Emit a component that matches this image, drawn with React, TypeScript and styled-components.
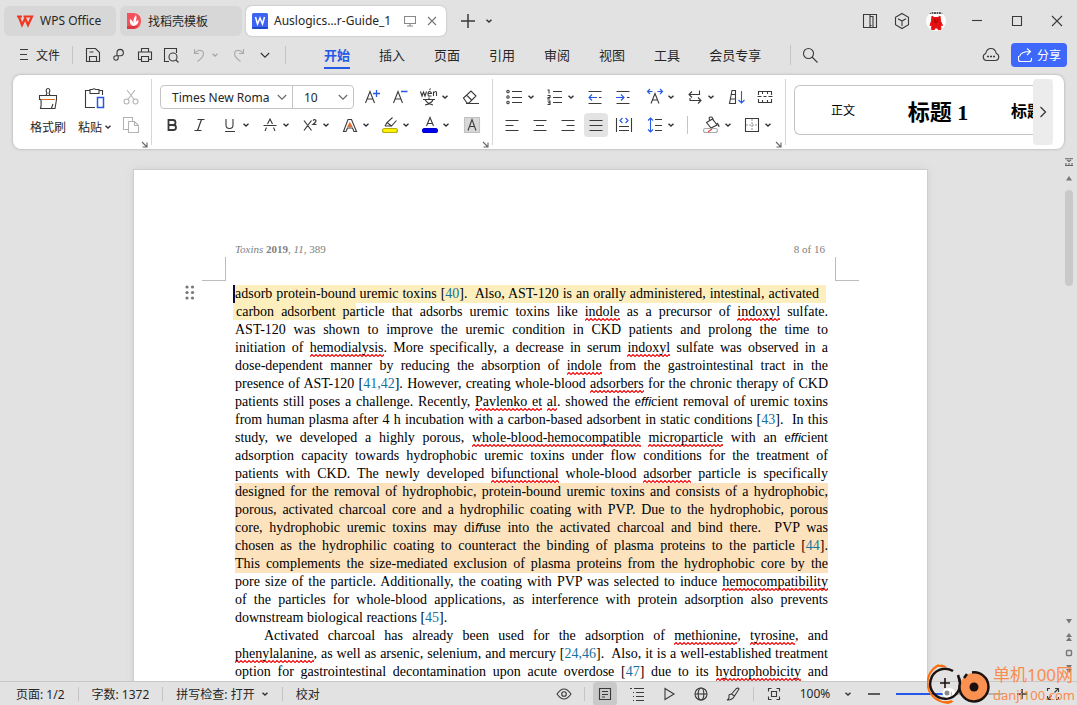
import React from "react";
import styled, { createGlobalStyle, css } from "styled-components";

const Global = createGlobalStyle`
  *, *::before, *::after { box-sizing: border-box; }
  body { margin: 0; background: #e2e2e2; }
  body, button, select, input {
    font-family: "Noto Sans", "Noto Sans CJK SC", sans-serif;
    font-size: 12px;
    color: #262626;
  }
  button, select { border: 0; padding: 0; margin: 0; background: transparent; }
  svg { display: block; flex: none; }
`;

/* ---------- icon helpers ---------- */

type IconProps = { w?: number; h?: number; color?: string; children: React.ReactNode };

const Icon = ({ w = 20, h = 20, color = "#3a3a3a", children }: IconProps) => (
  <svg width={w} height={h} viewBox={`0 0 ${w} ${h}`} fill="none" stroke={color} strokeWidth={1.1} aria-hidden="true">
    {children}
  </svg>
);

const Chevron = ({ color = "#333" }: { color?: string }) => (
  <Icon w={8} h={8} color={color}>
    <path d="M1.5 2.8 4 5 6.5 2.8" strokeWidth={1.5} />
  </Icon>
);

const WideChevron = ({ color = "#666" }: { color?: string }) => (
  <Icon w={12} h={12} color={color}>
    <path d="M1.8 4 6 8.2 10.2 4" />
  </Icon>
);

const blue = "#2458e6";

/* ---------- shell ---------- */

const Shell = styled.div`
  position: relative;
  display: flex;
  flex-direction: column;
  height: 100vh;
  overflow: hidden;
  background: #e2e2e2;
`;

const Row = styled.div<{ $gap?: number; $pad?: number }>`
  display: flex;
  align-items: center;
  gap: ${(p) => p.$gap ?? 0}px;
  padding-left: ${(p) => p.$pad ?? 0}px;
`;

const Spacer = styled.div`
  flex: 1;
`;

const Rule = styled.span<{ $h?: number }>`
  flex: none;
  width: 1px;
  height: ${(p) => p.$h ?? 18}px;
  background: #c4c4c4;
`;

/* ---------- title bar ---------- */

const TitleBar = styled.header`
  display: flex;
  flex: none;
  align-items: center;
  height: 41px;
  padding: 0 8px 0 4px;
`;

const FileTab = styled.button<{ $width: number; $active?: boolean }>`
  display: flex;
  align-items: center;
  gap: 6px;
  width: ${(p) => p.$width}px;
  height: 30px;
  padding: 0 8px 0 6px;
  margin-right: 4px;
  border-radius: 6px;
  background: ${(p) => (p.$active ? "#fff" : "#d7d7d7")};
  box-shadow: ${(p) => (p.$active ? "0 0 2px #aaa" : "none")};
  white-space: nowrap;
`;

const BareButton = styled.button<{ $w?: number }>`
  display: flex;
  flex: none;
  align-items: center;
  justify-content: center;
  width: ${(p) => p.$w ?? 24}px;
  height: 24px;
`;

const Avatar = styled.span`
  display: flex;
  align-items: center;
  justify-content: center;
  width: 20px;
  height: 20px;
  overflow: hidden;
  border-radius: 50%;
  background: #fff;
`;

const WindowButtons = styled.div`
  display: flex;
  align-items: center;
  gap: 16px;
  margin-left: 7px;
`;

/* ---------- menu bar ---------- */

const MenuBar = styled.nav`
  display: flex;
  flex: none;
  align-items: center;
  height: 28px;
  padding: 0 10px 0 14px;
`;

const FileButton = styled.button`
  display: flex;
  align-items: center;
  gap: 2px;
  height: 24px;
  margin-right: 12px;
`;

const RibbonTabs = styled.div`
  display: flex;
  gap: 29px;
  margin: 0 29px 0 38px;
`;

const RibbonTab = styled.button<{ $active?: boolean }>`
  height: 28px;
  padding-top: 2px;
  font-size: 13px;
  line-height: 24px;
  white-space: nowrap;
  border-bottom: 2px solid ${(p) => (p.$active ? blue : "transparent")};
  ${(p) => p.$active && css`color: ${blue}; font-weight: 700;`}
`;

const ShareButton = styled.button`
  display: flex;
  align-items: center;
  gap: 4px;
  height: 24px;
  padding: 0 6px;
  border-radius: 4px;
  background: #3d68fb;
  color: #fff;
`;

/* ---------- ribbon ---------- */

const Ribbon = styled.section`
  display: flex;
  flex: none;
  height: 74px;
  margin: 6px 13px 0;
  overflow: hidden;
  border-radius: 8px;
  background: #fff;
  box-shadow: 0 0 3px #a4a4a4;
`;

const Group = styled.div<{ $width: number; $pad: number }>`
  display: flex;
  flex: none;
  flex-direction: column;
  gap: 4px;
  width: ${(p) => p.$width}px;
  height: 66px;
  margin-top: 4px;
  padding: 6px 0 0 ${(p) => p.$pad}px;
  border-right: 1px solid #d6d6d6;
`;

const Launcher = styled.button`
  align-self: flex-end;
  height: 7px;
  margin-right: 3px;
`;

const Tool = styled.button<{ $active?: boolean }>`
  display: flex;
  flex: none;
  align-items: center;
  justify-content: center;
  width: 24px;
  height: 24px;
  border-radius: 4px;
  background: ${(p) => (p.$active ? "rgba(0, 0, 0, 0.11)" : "transparent")};
`;

const SplitButton = styled.button`
  display: flex;
  flex: none;
  align-items: center;
  width: 32px;
  height: 24px;
  padding-left: 2px;
  gap: 2px;
`;

const Clipboard = styled.div`
  display: grid;
  grid-template-columns: 52px 42px 30px;
  height: 52px;
`;

const BigTool = styled.button`
  display: flex;
  flex-direction: column;
  align-items: center;
  gap: 7px;
  padding-top: 2px;
  white-space: nowrap;
`;

const Stack = styled.div`
  display: flex;
  flex-direction: column;
  align-items: center;
  gap: 4px;
`;

const Combo = styled.div`
  display: flex;
  height: 24px;
  border: 1px solid #c4c4c4;
  border-radius: 4px;
`;

const ComboPart = styled.label<{ $width: number }>`
  display: grid;
  grid-template-columns: 1fr 12px;
  align-items: center;
  width: ${(p) => p.$width}px;
  padding: 0 4px 0 7px;
  & + & { border-left: 1px solid #c4c4c4; }
  select {
    appearance: none;
    min-width: 0;
    height: 22px;
    padding-left: 4px;
    outline: 0;
    font-size: 12px;
  }
`;

const Gallery = styled.div`
  display: flex;
  flex: 1;
  min-width: 0;
  height: 50px;
  margin: 10px 0 0 8px;
  overflow: hidden;
  border: 1px solid #c4c4c4;
  border-right: 0;
  border-radius: 6px 0 0 6px;
`;

const StyleCard = styled.button<{ $size: number; $bold?: boolean }>`
  flex: none;
  width: 94px;
  margin-left: 1px;
  color: #000;
  font-family: ${(p) => (p.$bold ? '"Liberation Serif", "Noto Sans CJK SC", serif' : "inherit")};
  font-size: ${(p) => p.$size}px;
  font-weight: ${(p) => (p.$bold ? 700 : 400)};
  white-space: nowrap;
`;

const GalleryNext = styled.button`
  display: flex;
  flex: none;
  align-items: center;
  justify-content: center;
  width: 20px;
  height: 66px;
  margin: 4px 11px 0 0;
  border-radius: 4px;
  background: #ececec;
`;

/* ---------- document ---------- */

const Workspace = styled.main`
  display: flex;
  flex: 1;
  min-height: 0;
`;

const Canvas = styled.div`
  flex: 1;
  min-width: 0;
  padding-top: 21px;
  overflow: hidden;
`;

const Page = styled.article`
  position: relative;
  width: 793px;
  min-height: 1123px;
  margin: 0 auto;
  padding: 71px 68px 0;
  background: #fff;
  box-shadow: 0 0 0 1px #cdcdcd, 0 0 8px #ccc;
  color: #000;
  font-family: "Liberation Serif", serif;
`;

const PageHeader = styled.div`
  display: flex;
  justify-content: space-between;
  padding: 0 34px 0 33px;
  color: #808080;
  font-size: 11px;
  line-height: 16px;
`;

const CropMarks = styled.div`
  display: flex;
  justify-content: space-between;
  height: 24px;
  margin-bottom: 4px;
`;

const CropMark = styled.span<{ $side: "left" | "right" }>`
  width: 24px;
  border-bottom: 1px solid #bdbdbd;
  border-${(p) => (p.$side === "left" ? "right" : "left")}: 1px solid #bdbdbd;
`;

const Body = styled.div`
  padding: 0 31px 0 33px;
  font-size: 14px;
  line-height: 18px;
`;

const Line = styled.div<{ $tone?: "yellow" | "orange"; $indent?: number; $natural?: boolean }>`
  height: 18px;
  white-space: nowrap;
  text-align: justify;
  text-align-last: ${(p) => (p.$natural ? "left" : "justify")};
  padding-left: ${(p) => p.$indent ?? 0}px;
  ${(p) => p.$tone === "orange" && css`background: #fce3be;`}
  ${(p) =>
    p.$tone === "yellow" &&
    css`
      margin: 0 2px 0 -2px;
      padding-right: 7px;
      background: #fdefbd;
      border-left: 2px solid #0a0a3c;
    `}
`;

const Mark = styled.mark`
  margin-left: -3px;
  padding: 1px 0 1px 3px;
  background: #fdefbd;
  color: inherit;
`;

const Typo = styled.span`
  padding-bottom: 2px;
  background: url("data:image/svg+xml,%3Csvg xmlns='http://www.w3.org/2000/svg' width='4' height='3'%3E%3Cpath d='M-1 3.5L2 .5L5 3.5' fill='none' stroke='%23f00000' stroke-width='1.1'/%3E%3C/svg%3E")
    repeat-x left bottom;
`;

const Cite = styled.a`
  color: #16729f;
  text-decoration: none;
`;

const Ligature = styled.i`
  font-family: "Liberation Sans", sans-serif;
  font-size: 13px;
`;

const DragHandle = styled.span`
  position: absolute;
  top: 115px;
  left: 51px;
`;

const Scroll = styled.aside`
  display: flex;
  flex-direction: column;
  align-items: center;
  gap: 8px;
  width: 16px;
  padding: 9px 0 8px;
`;

const ScrollThumb = styled.span`
  width: 8px;
  height: 96px;
  border-radius: 4px;
  background: #c9c9c9;
`;

/* ---------- status bar ---------- */

const StatusBar = styled.footer`
  display: flex;
  flex: none;
  align-items: center;
  height: 24px;
  padding: 0 4px 0 16px;
  border-top: 1px solid #c8c8c8;
  background: #e2e2e2;
  white-space: nowrap;
`;

const ZoomSlider = styled.input`
  appearance: none;
  width: 107px;
  height: 12px;
  margin: 0;
  background: linear-gradient(90deg, ${blue} 50%, #b4b4b4 50%) center / 100% 2px no-repeat;
  &::-webkit-slider-thumb {
    appearance: none;
    width: 11px;
    height: 11px;
    border: 3px solid #fff;
    border-radius: 50%;
    background: #8a8a8a;
  }
`;

const Watermark = styled.div`
  position: absolute;
  right: 2px;
  bottom: 0;
  display: flex;
  align-items: center;
  gap: 2px;
  color: #fb8b4e;
  pointer-events: none;
`;

const WatermarkText = styled.div`
  display: flex;
  flex-direction: column;
  font-family: "Noto Sans", "Noto Sans CJK SC", sans-serif;
  font-size: 17px;
  line-height: 22px;
  small {
    font-size: 13px;
    line-height: 18px;
  }
`;

/* ---------- document text ----------
   ~word~ is a spelling mark, {n} a citation, ^text^ highlighted, |ffi| a ligature */

type TextLine = { t: string; tone?: "yellow" | "orange"; indent?: number; natural?: boolean };

const lines: TextLine[] = [
  { t: "adsorb protein-bound uremic toxins [{40}].\u00a0 Also, AST-120 is an orally administered, intestinal, activated", tone: "yellow" },
  { t: "^carbon adsorbent pa^rticle that adsorbs uremic toxins like ~indole~ as a precursor of ~indoxyl~ sulfate.", indent: 1 },
  { t: "AST-120 was shown to improve the uremic condition in CKD patients and prolong the time to" },
  { t: "initiation of ~hemodialysis~. More specifically, a decrease in serum ~indoxyl~ sulfate was observed in a" },
  { t: "dose-dependent manner by reducing the absorption of ~indole~ from the gastrointestinal tract in the" },
  { t: "presence of AST-120 [{41,42}]. However, creating whole-blood ~adsorbers~ for the chronic therapy of CKD" },
  { t: "patients still poses a challenge. Recently, ~Pavlenko et~ ~al~. showed the e|ffi|cient removal of uremic toxins" },
  { t: "from human plasma after 4 h incubation with a carbon-based adsorbent in static conditions [{43}].\u00a0 In this" },
  { t: "study, we developed a highly porous, ~whole-blood-hemocompatible~ ~microparticle~ with an e|ffi|cient" },
  { t: "adsorption capacity towards hydrophobic uremic toxins under flow conditions for the treatment of" },
  { t: "patients with CKD. The newly developed ~bifunctional~ whole-blood ~adsorber~ particle is specifically" },
  { t: "designed for the removal of hydrophobic, protein-bound uremic toxins and consists of a hydrophobic,", tone: "orange" },
  { t: "porous, activated charcoal core and a hydrophilic coating with PVP. Due to the hydrophobic, porous", tone: "orange" },
  { t: "core, hydrophobic uremic toxins may di|ff|use into the activated charcoal and bind there.\u00a0 PVP was", tone: "orange" },
  { t: "chosen as the hydrophilic coating to counteract the binding of plasma proteins to the particle [{44}].", tone: "orange" },
  { t: "This complements the size-mediated exclusion of plasma proteins from the hydrophobic core by the", tone: "orange" },
  { t: "pore size of the particle. Additionally, the coating with PVP was selected to induce ~hemocompatibility~" },
  { t: "of the particles for whole-blood applications, as interference with protein adsorption also prevents" },
  { t: "downstream biological reactions [{45}].", natural: true },
  { t: "Activated charcoal has already been used for the adsorption of ~methionine~, ~tyrosine~, and", indent: 29 },
  { t: "~phenylalanine~, as well as arsenic, selenium, and mercury [{24,46}].\u00a0 Also, it is a well-established treatment" },
  { t: "option for gastrointestinal decontamination upon acute overdose [{47}] due to its ~hydrophobicity~ and" },
];

const renderText = (text: string) =>
  text.split(/(~[^~]+~|\{[^}]+\}|\^[^^]+\^|\|[^|]+\|)/).map((part, i) => {
    const inner = part.slice(1, -1);
    if (part[0] === "~") return <Typo key={i}>{inner}</Typo>;
    if (part[0] === "{") return <Cite key={i} href={`#ref-${inner}`}>{inner}</Cite>;
    if (part[0] === "^") return <Mark key={i}>{inner}</Mark>;
    if (part[0] === "|") return <Ligature key={i}>{inner}</Ligature>;
    return part;
  });

/* ---------- pieces ---------- */

const LaunchGlyph = () => (
  <Icon w={7} h={7} color="#666"><path d="M1 1 5.500 5.500M6 1.500V6H1.500" /></Icon>
);

const Split = ({ label, children }: { label: string; children: React.ReactNode }) => (
  <SplitButton aria-label={label}>{children}<Chevron /></SplitButton>
);

const Title = () => (
  <TitleBar>
    <FileTab $width={112}>
      <svg width="24" height="20" viewBox="0 0 24 20" aria-hidden="true">
        <path d="M7 5.500h5M8.800 5.500 12 14l3.200-6.500L18 14l4-8.500h-8.500" fill="none" stroke="#f3361f" strokeWidth="2.200" />
      </svg>
      WPS Office
    </FileTab>
    <FileTab $width={122}>
      <svg width="16" height="18" viewBox="0 0 16 18" aria-hidden="true">
        <path d="M1 1h6c5 0 8 3 8 8s-3 8-8 8H1z" fill="#f4525a" />
        <path d="M1 14h11c-1 2-3 3-5 3H1z" fill="#d93841" />
        <path d="M7.500 14C4 13 3.500 10 4 7c2 1 3.500 3 3.500 5C7 8 8 5 10 3c.8 3 .5 5-.5 7 1-1.200 2-1.700 3-1.700C12.500 11.500 11 13.500 7.500 14z" fill="#fff" />
      </svg>
      找稻壳模板
    </FileTab>
    <FileTab $width={200} $active>
      <svg width="16" height="16" viewBox="0 0 16 16" aria-hidden="true">
        <rect width="16" height="16" rx="1.500" fill="#3d63f5" />
        <path d="M0 14h16v.500q0 1.500-1.500 1.500H1.500Q0 16 0 14.500z" fill="#1c48c9" />
        <path d="M3.500 4 5.500 11 8 5l2.500 6 2-7" fill="none" stroke="#fff" strokeWidth="1.500" />
      </svg>
      Auslogics...r-Guide_1
      <Spacer />
      <Row $gap={10}>
        <Icon w={12} h={12} color="#888"><path d="M.500 1.500h11v7H.500zM6 8.500V11M3 11h6" /></Icon>
        <Icon w={12} h={12} color="#777"><path d="m2 2 8 8M10 2l-8 8" /></Icon>
      </Row>
    </FileTab>
    <Row $gap={5} $pad={6}>
      <BareButton aria-label="新建"><Icon w={14} h={14}><path d="M7 0v14M0 7h14" strokeWidth={1.5} /></Icon></BareButton>
      <BareButton aria-label="更多标签" $w={8}><Chevron /></BareButton>
    </Row>
    <Spacer />
    <Row $gap={8}>
      <BareButton aria-label="分屏"><Icon w={16} h={16}><path d="M1.500 1.500h13v13h-13zM8 1.500v13M8 3.500h3v11M9.500 12.500h-1" /></Icon></BareButton>
      <BareButton aria-label="应用"><Icon w={16} h={18}><path d="m8 1.500 6.500 3.800v7.400L8 16.500l-6.500-3.800V5.300zM4 6.700 8 9l4-2.300M8 9v5" /></Icon></BareButton>
    </Row>
    <BareButton aria-label="账户" $w={44}>
      <Avatar>
        <svg width="20" height="20" viewBox="0 0 20 20">
          <path d="M3 2h14" stroke="#222" strokeWidth="1.500" strokeDasharray="2 .5" />
          <path d="M6 5l2 1.500h4L14 5l.5 5 2 4.500-2-.5.500 4.500h-3V17H8.500v1.500h-3L6 14l-2 .5L5.500 10z" fill="#e60f0f" stroke="#e60f0f" />
          <path d="M8 9h1.500M11 9h1.500M8.500 11h3" stroke="#7a0707" />
        </svg>
      </Avatar>
    </BareButton>
    <WindowButtons>
      <BareButton aria-label="最小化"><Icon w={12} h={12}><path d="M1 5.500h10" /></Icon></BareButton>
      <BareButton aria-label="最大化"><Icon w={12} h={12}><path d="M1.500 1.500h9v9h-9z" /></Icon></BareButton>
      <BareButton aria-label="关闭"><Icon w={12} h={12}><path d="m1 1 10 10M11 1 1 11" /></Icon></BareButton>
    </WindowButtons>
  </TitleBar>
);

const Menu = () => (
  <MenuBar>
    <FileButton>
      <Icon><path d="M6 4.500h8M6 9.500h7M6 14.500h8" /></Icon>
      文件
    </FileButton>
    <Rule />
    <BareButton aria-label="保存" $w={40}><Icon w={16} h={16}><path d="M1.500 14.500v-13h9l4 4v9zM4.500 14.500v-5h7v5M4.500 5h4" /></Icon></BareButton>
    <BareButton aria-label="输出" $w={12}><Icon w={14} h={14}><path d="M5 7.500V4.500a3.200 3.200 0 1 1 3.500 3.300H4A2.200 2.200 0 1 0 6.200 10V7.500" /></Icon></BareButton>
    <BareButton aria-label="打印" $w={40}><Icon w={16} h={16}><path d="M4.500 5V1.500h7V5M4.500 12.500h-3V5h13v7.500h-3M4.500 9.500h7v5h-7z" /></Icon></BareButton>
    <Row $gap={10}>
      <BareButton aria-label="打印预览" $w={12}><Icon w={16} h={16}><path d="M6 14.500H1.500v-13h12V6M13 13l2.500 2.500" /><circle cx="10" cy="10" r="4" /></Icon></BareButton>
      <BareButton aria-label="撤销"><Icon w={14} h={14} color="#aaa"><path d="M2.500 1v4.500H7M3 5c3-4 8.500-3 8.500.500S9 11 5.500 13.500" /></Icon></BareButton>
    </Row>
    <BareButton aria-label="撤销列表" $w={8}><Chevron color="#aaa" /></BareButton>
    <BareButton aria-label="恢复" $w={40}><Icon w={14} h={14} color="#aaa"><path d="M11.500 1v4.500H7M11 5C8 1 2.500 2 2.500 5.500S5 11 8.500 13.500" /></Icon></BareButton>
    <BareButton aria-label="更多" $w={12}><WideChevron color="#333" /></BareButton>
    <Row $pad={14}>
      <Rule />
    </Row>
    <RibbonTabs>
      {["开始", "插入", "页面", "引用", "审阅", "视图", "工具", "会员专享"].map((name, i) => (
        <RibbonTab key={name} $active={i === 0}>{name}</RibbonTab>
      ))}
    </RibbonTabs>
    <Rule $h={20} />
    <BareButton aria-label="搜索" $w={38}><Icon w={16} h={16}><circle cx="6.500" cy="6.500" r="5" /><path d="m10 10 5.500 5.500" /></Icon></BareButton>
    <Spacer />
    <BareButton aria-label="云同步" $w={40}>
      <Icon w={18} h={16}>
        <path d="M4.500 13.500a3.600 3.600 0 0 1-.8-7C4.500 3 6.500 1.500 9 1.500S13.500 3 14.300 6.500a3.600 3.600 0 0 1-.8 7z" />
        <path d="M5 9.500h2M8 9.500h2M11 9.500h2" strokeWidth={1.6} />
      </Icon>
    </BareButton>
    <ShareButton>
      <Icon w={16} h={16} color="#fff"><path d="M1.500 9v3.500q0 2 2 2h9q2 0 2-2V11M2.500 9.500C3.500 6 6.500 4.500 13 4.500M10 1.500l3.500 3-3.500 3.500" /></Icon>
      分享
    </ShareButton>
  </MenuBar>
);

const ClipboardGroup = () => (
  <Group $width={139} $pad={9}>
    <Clipboard>
      <BigTool>
        <Icon w={24} h={24}>
          <path d="M3.500 8.500h17v4l-1.500 9H4.500q1-3 .500-9h-1.500zM10 8.500 11 6c-1.500-2-1-4.500 1-4.500S14.500 4 13 6l1 2.500M17 17l-1.500 4" />
          <path d="M6 12.500h13" stroke="#d26a2c" />
        </Icon>
        格式刷
      </BigTool>
      <BigTool>
        <Icon w={24} h={24}>
          <path d="M7 3.500H2.500v17H12M16 3.500h3.500V8M7 2.500h2.500a2 2 0 0 1 3 0H16v4H7z" />
          <path d="M14.500 10.500h6v10h-6z" stroke={blue} strokeWidth={1.5} />
        </Icon>
        <Row $gap={2}>粘贴<Chevron /></Row>
      </BigTool>
      <Stack>
        <Tool aria-label="剪切"><Icon w={16} h={16} color="#b4b4b4"><path d="m4 1 7.500 10M12 1 4.500 11" /><circle cx="3.500" cy="12.500" r="2.500" /><circle cx="12.500" cy="12.500" r="2.500" /></Icon></Tool>
        <Tool aria-label="复制"><Icon w={18} h={18} color="#b4b4b4"><path d="M6 13.500H1.500v-12h9V5M6.500 5.500h6l4 4v7h-10zM12.500 5.500v4h4" /></Icon></Tool>
      </Stack>
    </Clipboard>
    <Launcher aria-label="剪贴板"><LaunchGlyph /></Launcher>
  </Group>
);

const FontGroup = () => (
  <Group $width={341} $pad={8}>
    <Row $gap={7}>
      <Combo>
        <ComboPart $width={131}>
          <select aria-label="字体"><option>Times New Roma</option></select>
          <WideChevron />
        </ComboPart>
        <ComboPart $width={61}>
          <select aria-label="字号"><option>10</option></select>
          <WideChevron />
        </ComboPart>
      </Combo>
      <Row $gap={10}>
        <Row $gap={4}>
          <Tool aria-label="增大字号"><Icon><path d="M2.500 16 7 4.500 11.500 16M4 12h6" /><path d="M10 6.500h7M13.500 3v7" stroke={blue} strokeWidth={1.3} /></Icon></Tool>
          <Tool aria-label="减小字号"><Icon><path d="M2.500 16 7 4.500 11.500 16M4 12h6" /><path d="M10 4.500h6.500" stroke={blue} strokeWidth={1.3} /></Icon></Tool>
          <Split label="拼音指南">
            <Icon>
              <path d="M1.500 4.500 3 9l1.500-4L6 9l1.500-4.500M9 6.500h3.500Q12 4.500 10.500 4.500T9 7t1.500 2h2M10.500 3l1-1.500M14.500 9V4.500M14.500 6q3-3 3 0v3M4 12.500h12M10 10.500v2M6 12.500q2 4 8 5.500M14 12.500q-1 4-8 5.500" />
            </Icon>
          </Split>
        </Row>
        <Tool aria-label="清除格式"><Icon><path d="m2.500 11 7.500-7 5 5-7 7H6zM5.500 8l5 5M5 16.500h13" /></Icon></Tool>
      </Row>
    </Row>
    <Row $gap={6}>
      <Row $gap={4}>
        <Tool aria-label="加粗"><Icon><path d="M6.500 5h4.500a2.300 2.300 0 0 1 0 5H6.500zM6.500 10h5a2.500 2.500 0 0 1 0 5h-5z" strokeWidth={1.8} /></Icon></Tool>
        <Tool aria-label="倾斜"><Icon><path d="M7.500 4.500h7M4.500 15.500h7M11.500 4.500l-4 11" strokeWidth={1.2} /></Icon></Tool>
      </Row>
      <Row $gap={10}>
        <Row $gap={8}>
          <Split label="下划线"><Icon><path d="M6 4v6q0 3.500 3.500 3.500T13 10V4M5 16.500h10" /></Icon></Split>
          <Split label="删除线"><Icon><path d="M7.500 9 10 4l2.500 5M3.500 10.500h13M6.500 12.500 5 16M13.500 12.500 15 16" /></Icon></Split>
          <Split label="上标"><Icon><path d="m4 5.500 7.500 10M11.500 5.500 4 15.500M13 5.500q1.500-1.500 2.700-.3T13 9.500h3.500" strokeWidth={1.2} /></Icon></Split>
          <Split label="文字效果"><Icon><path d="M3.500 16.500 8 4.500h3.500l5 12H14L12.500 13h-5L6 16.500z" /><path d="M8 11.500 9.800 8l2 3.500z" fill="#e2702d" stroke="#e2702d" /></Icon></Split>
          <Split label="突出显示">
            <Icon><path d="m5 11 2-3.500 5.500-5M7 7.500l4.500 3.500 5-5.500M5 11h6" /><rect x="2.500" y="13.500" width="15" height="4" rx="2" fill="#fff200" stroke="#b5ac15" /></Icon>
          </Split>
          <Split label="字体颜色">
            <Icon><path d="M6.500 11 10 2.500l3.500 8.500M7.500 8.500h5" /><rect x="2.500" y="13.500" width="15" height="4" rx="2" fill="#0000f0" stroke="#0000c8" /></Icon>
          </Split>
        </Row>
        <Tool aria-label="字符底纹"><Icon><rect x="2.500" y="2.500" width="15" height="15" fill="#d8d8d8" stroke="#c2c2c2" /><path d="M6 15.500 10 4.500l4 11M7.500 11.500h5" /></Icon></Tool>
      </Row>
    </Row>
    <Launcher aria-label="字体设置"><LaunchGlyph /></Launcher>
  </Group>
);

const ParagraphGroup = () => (
  <Group $width={293} $pad={7}>
    <Row $gap={8} $pad={3}>
      <Split label="项目符号"><Icon><path d="M7 4.500h10M7 10.500h10M7 15.500h10" /><circle cx="3" cy="4.500" r="1.200" /><circle cx="3" cy="10" r="1.200" /><circle cx="3" cy="15.500" r="1.200" /></Icon></Split>
      <Split label="编号"><Icon><path d="M8 4.500h9M8 10.500h9M8 15.500h9M2.500 3H4v3.500M2.500 8.500H5v2H3v1.500h2M2.500 14H5v3.500H2.500M3 15.700h2" /></Icon></Split>
      <Row $gap={4}>
        <Tool aria-label="减少缩进"><Icon><path d="M3.500 4.500h13M3.500 16.500h13M14 10.500h2.500" /><path d="M12 10.500H4M7 7.500l-3 3 3 3" stroke={blue} /></Icon></Tool>
        <Tool aria-label="增加缩进"><Icon><path d="M3.500 4.500h13M3.500 16.500h13M14 10.500h2.500" /><path d="M3 10.500h8M8 7.500l3 3-3 3" stroke={blue} /></Icon></Tool>
      </Row>
      <Split label="中文版式"><Icon><path d="m6 16.500 4-10 4 10M7.500 13h5" /><path d="M7.500 4.500H2.500M5 2 2.500 4.500 5 7M12.500 4.500h5M15 2l2.500 2.500L15 7" stroke={blue} /></Icon></Split>
      <Split label="换行"><Icon><path d="M14.500 3.500v4H4M7 4.500l-3 3 3 3M5 11v2.500h11M13 10.500l3 3-3 3" /></Icon></Split>
      <Row $gap={4} $pad={2}>
        <Tool aria-label="排序"><Icon><path d="M2.500 16.500 5 3.500h3.500v13zM4.500 7.500h4M3.500 12h5" /><path d="M14.500 4v12M11.500 13l3 3 3-3" stroke={blue} /></Icon></Tool>
        <Tool aria-label="制表"><Icon><path d="M3.500 8V4.500h13V8M3.500 12v3.500h13V12M7.500 4.500V7M12.500 4.500V7M7.500 13v2.500M12.500 13v2.500M2.500 9.500h4M8.500 9.500h3M13.500 9.500h4" /></Icon></Tool>
      </Row>
    </Row>
    <Row $gap={7}>
      <Row $gap={4}>
        <Tool aria-label="左对齐"><Icon><path d="M3.500 5.500h13M3.500 10.500h8M3.500 15.500h13" /></Icon></Tool>
        <Tool aria-label="居中"><Icon><path d="M3.500 5.500h13M6 10.500h8M3.500 15.500h13" /></Icon></Tool>
        <Tool aria-label="右对齐"><Icon><path d="M3.500 5.500h13M8.500 10.500h8M3.500 15.500h13" /></Icon></Tool>
        <Tool aria-label="两端对齐" $active><Icon><path d="M3.500 5.500h13M3.500 10.500h13M3.500 15.500h13" /></Icon></Tool>
        <Tool aria-label="分散对齐"><Icon><path d="M2.500 3v14M17.500 3v14M5 11.500h10M5 15.500h10" /><path d="M8.500 3 6 5.500 8.500 8M11.500 3 14 5.500 11.500 8" stroke={blue} /></Icon></Tool>
      </Row>
      <Row $gap={12}>
        <Split label="行距"><Icon><path d="M10 4.500h7M10 10.500h7M10 15.500h7" /><path d="M5.500 3v14M3 5.500 5.500 3 8 5.500M3 14.500 5.500 17 8 14.500" stroke={blue} /></Icon></Split>
        <Rule />
        <Row $gap={8}>
          <Split label="底纹"><Icon><path d="m4.500 7.500 6-3.500 4.500 6-6 3zM8 5.500q-2-3 .5-3.500t3 4M15 8q2 2 2 4" /><rect x="1.500" y="13.500" width="14" height="4" rx="2" stroke="#aaa" fill="#fff" /><path d="m6 17 4-3" stroke="#e04040" /></Icon></Split>
          <Split label="边框"><Icon><path d="M3.500 3.500h13v13h-13z" /><path d="M10 4v12M4 10h12" stroke="#999" strokeDasharray="2 1" /></Icon></Split>
        </Row>
      </Row>
    </Row>
    <Launcher aria-label="段落设置"><LaunchGlyph /></Launcher>
  </Group>
);

const Document = () => (
  <Workspace>
    <Canvas>
      <Page>
        <PageHeader>
          <span><i>Toxins</i> <b>2019</b>, <i>11,</i> 389</span>
          <span>8 of 16</span>
        </PageHeader>
        <CropMarks><CropMark $side="left" /><CropMark $side="right" /></CropMarks>
        <DragHandle>
          <svg width="10" height="16" viewBox="0 0 10 16" fill="#777" aria-hidden="true">
            {[2, 7.5, 13].map((y) => (
              <React.Fragment key={y}><circle cx="2" cy={y} r="1.600" /><circle cx="7.500" cy={y} r="1.600" /></React.Fragment>
            ))}
          </svg>
        </DragHandle>
        <Body>
          {lines.map((line) => (
            <Line key={line.t} $tone={line.tone} $indent={line.indent} $natural={line.natural}>{renderText(line.t)}</Line>
          ))}
        </Body>
      </Page>
    </Canvas>
    <Scroll>
      <Icon w={8} h={8} color="#666"><path d="M0 .700h8M2 2l2 1.500L6 2M0 7.500h8M1 5v2M4 5v2M7 5v2" /></Icon>
      <Icon w={8} h={8} color="none"><path d="M1 6.500 4 2l3 4.500z" fill="#777" /></Icon>
      <ScrollThumb />
      <Spacer />
      <Icon w={8} h={8} color="none"><path d="M1 2h6L4 6.500z" fill="#777" /></Icon>
      <Icon w={8} h={8} color="none"><path d="M1 4 4 0l3 4zM1 8l3-4 3 4z" fill="#777" /></Icon>
      <Icon w={8} h={8} color="#777"><rect x="1.500" y="1.500" width="5" height="5" rx="1" strokeWidth={1.4} /></Icon>
      <Icon w={8} h={8} color="none"><path d="M1 0h6L4 4zM1 4h6L4 8z" fill="#777" /></Icon>
    </Scroll>
  </Workspace>
);

const Status = () => (
  <StatusBar>
    <Row $gap={13}>
      <span>页面: 1/2</span><Rule $h={14} />
      <span>字数: 1372</span><Rule $h={14} />
      <Row $gap={6}>拼写检查: 打开<Chevron /></Row><Rule $h={14} />
      <span>校对</span>
    </Row>
    <Spacer />
    <Row $gap={8}>
      <BareButton aria-label="护眼模式"><Icon w={16} h={16}><path d="M1 8q7-10 14 0-7 10-14 0z" /><circle cx="8" cy="8" r="2.300" /></Icon></BareButton>
      <Rule $h={14} />
      <Tool aria-label="页面视图" $active><Icon w={14} h={14}><path d="M1.500 1.500h11v11h-11zM4 4.500h6M4 7.500h6M4 10h3" /></Icon></Tool>
      <BareButton aria-label="大纲"><Icon w={16} h={16}><path d="M1 2.500h2M5 2.500h10M4 6.500h1M7 6.500h8M4 10.500h1M7 10.500h8M4 14.500h1M7 14.500h8" /></Icon></BareButton>
      <BareButton aria-label="阅读"><Icon w={14} h={14}><path d="M3 1.500 12 7l-9 5.500z" /></Icon></BareButton>
      <BareButton aria-label="网页视图"><Icon w={14} h={14}><circle cx="7" cy="7" r="6" /><ellipse cx="7" cy="7" rx="2.800" ry="6" /><path d="M1 7h12" /></Icon></BareButton>
      <BareButton aria-label="写作"><Icon w={14} h={14}><path d="m5.500 7 5-5.500q2-1 2.500.500L8.500 9zM5.500 7Q2.500 7 3 9.500T1 13q5 .5 7.500-4z" /></Icon></BareButton>
      <Rule $h={14} />
      <BareButton aria-label="适合页面"><Icon w={14} h={14}><path d="M1.500 4.500v-3h3M9.500 1.500h3v3M12.500 9.500v3h-3M4.500 12.500h-3v-3M4.500 4.500h5v5h-5z" /></Icon></BareButton>
      <BareButton $w={42}>100%</BareButton>
      <Chevron />
      <BareButton aria-label="缩小" $w={28}><Icon w={12} h={12}><path d="M0 6h12" strokeWidth={1.6} /></Icon></BareButton>
      <ZoomSlider type="range" aria-label="缩放" min={0} max={200} defaultValue={100} />
      <BareButton aria-label="放大" $w={22}><Icon w={12} h={12}><path d="M1 6h10M6 1v10" strokeWidth={1.6} /></Icon></BareButton>
    </Row>
    <BareButton aria-label="全屏" $w={40}><Icon w={14} h={14}><path d="M1.500 4V1.500H4M12.500 10v2.500H10M8.500 5.500l4-4M9 1.500h3.500V5M5.500 8.500l-4 4M5 12.500H1.500V9" /></Icon></BareButton>
  </StatusBar>
);

export default function App() {
  return (
    <Shell>
      <Global />
      <Title />
      <Menu />
      <Ribbon>
        <ClipboardGroup />
        <FontGroup />
        <ParagraphGroup />
        <Gallery>
          <StyleCard $size={12}>正文</StyleCard>
          <StyleCard $size={22} $bold>标题 1</StyleCard>
          <StyleCard $size={16} $bold>标题 2</StyleCard>
        </Gallery>
        <GalleryNext aria-label="更多样式"><Icon w={8} h={12}><path d="m1.500 1 5 5-5 5" strokeWidth={1.3} /></Icon></GalleryNext>
      </Ribbon>
      <Document />
      <Status />
      <Watermark>
        <svg width="64" height="42" viewBox="0 0 64 42" fill="none" aria-hidden="true">
          <path d="M12 2C-3 9-4 31 13 38q5 3 12 0" stroke="#fb6f10" strokeWidth="2" />
          <path d="M9 4q5-5 11 0zM15 38q6 6 12 0z" fill="#fb6f10" />
          <path d="M26 8A15 15 0 1 0 32 15" stroke="#1b1210" strokeWidth="2.500" />
          <path d="M18 15v10M13 20h10" stroke="#1b1210" strokeWidth="1.600" />
          <circle cx="47" cy="24" r="14" fill="#fb9150" />
          <path d="M45 9.500A14.500 14.500 0 1 1 33 20q-1-5-2-8M40 11l-3 4" stroke="#1b1210" strokeWidth="2.500" />
          <circle cx="47" cy="24" r="4.500" fill="#1b1210" />
          <circle cx="20" cy="30" r="3.500" fill="#8a8a8a" stroke="#fff" strokeWidth="2" />
        </svg>
        <WatermarkText>单机100网<small>danji100.com</small></WatermarkText>
      </Watermark>
    </Shell>
  );
}
